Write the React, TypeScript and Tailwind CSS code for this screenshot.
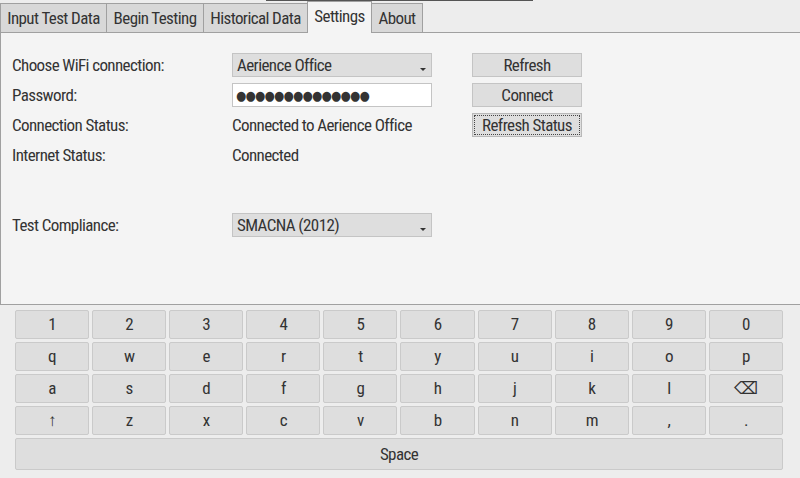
import React from "react";

const tabs = [
  { label: "Input Test Data", w: "w-[107px]" },
  { label: "Begin Testing", w: "w-[98px]" },
  { label: "Historical Data", w: "w-[105px]" },
  { label: "Settings", w: "w-[65px]" },
  { label: "About", w: "w-[52px]" },
];

const keyRows = [
  ["1", "2", "3", "4", "5", "6", "7", "8", "9", "0"],
  ["q", "w", "e", "r", "t", "y", "u", "i", "o", "p"],
  ["a", "s", "d", "f", "g", "h", "j", "k", "l", "⌫"],
  ["↑", "z", "x", "c", "v", "b", "n", "m", ",", "."],
];

function Combo({ value }: { value: string }) {
  return (
    <div className="relative flex h-[24px] w-[200px] items-center border border-[#c4c4c4] bg-[#dedede] pl-[4px]">
      <span>{value}</span>
      <span className="absolute right-[5px] top-[14px] h-0 w-0 border-x-[3px] border-t-[3px] border-x-transparent border-t-[#333]" />
    </div>
  );
}

function Btn({ label, focused }: { label: string; focused?: boolean }) {
  return (
    <div
      className={
        "flex h-[24px] w-[110px] items-center justify-center border bg-[#dedede] " +
        (focused ? "border-[#b8b8b8] outline outline-1 outline-dotted -outline-offset-[3px] outline-[#444]" : "border-[#c4c4c4]")
      }
    >
      {label}
    </div>
  );
}

export default function App() {
  return (
    <div
      className="relative h-[478px] w-[800px] overflow-hidden bg-[#ededed] text-[17px] leading-none tracking-[-0.6px] text-[#333] [font-stretch:condensed]"
      style={{ fontFamily: "'Roboto Condensed', 'Liberation Sans Narrow', Roboto, sans-serif" }}
    >
      {/* stray line on top of the window */}
      <div className="absolute left-[266px] top-0 h-px w-[267px] bg-[#555]" />

      {/* tab bar */}
      <div className="flex h-[32px] items-end">
        {tabs.map((t) => {
          const active = t.label === "Settings";
          return (
            <div
              key={t.label}
              className={
                (active
                  ? "relative z-10 -mb-px h-[32px] bg-[#f4f4f4] pb-[2px] "
                  : "h-[29px] bg-[#d8d8d8] ") +
                "-ml-px flex items-center justify-center border border-b-0 border-[#a0a0a0] first:ml-0 " +
                t.w
              }
            >
              {t.label}
            </div>
          );
        })}
      </div>

      {/* settings panel */}
      <div className="h-[273px] border border-r-0 border-[#a0a0a0] bg-[#f4f4f4] pl-[11px] pt-[20px]">
        <div className="flex flex-col gap-[6px]">
          <div className="flex h-[24px] items-center">
            <span className="w-[220px]">Choose WiFi connection:</span>
            <Combo value="Aerience Office" />
            <div className="ml-[40px]">
              <Btn label="Refresh" />
            </div>
          </div>
          <div className="flex h-[24px] items-center">
            <span className="w-[220px]">Password:</span>
            <div className="flex h-[24px] w-[200px] items-center border border-[#c4c4c4] bg-white pl-[3px] text-[13px] tracking-[-0.7px]" style={{ fontFamily: "'DejaVu Sans', sans-serif" }}>
              ●●●●●●●●●●●●●●
            </div>
            <div className="ml-[40px]">
              <Btn label="Connect" />
            </div>
          </div>
          <div className="flex h-[24px] items-center">
            <span className="w-[220px]">Connection Status:</span>
            <span className="w-[200px]">Connected to Aerience Office</span>
            <div className="ml-[40px]">
              <Btn label="Refresh Status" focused />
            </div>
          </div>
          <div className="flex h-[24px] items-center">
            <span className="w-[220px]">Internet Status:</span>
            <span>Connected</span>
          </div>
          <div className="mt-[40px] flex h-[24px] items-center">
            <span className="w-[220px]">Test Compliance:</span>
            <Combo value="SMACNA (2012)" />
          </div>
        </div>
      </div>

      {/* on-screen keyboard */}
      <div className="flex flex-col gap-[3px] pl-[15px] pr-[17px] pt-[5px]">
        {keyRows.map((row, i) => (
          <div key={i} className="grid grid-cols-10 gap-[3px]">
            {row.map((k) => (
              <div
                key={k}
                className="flex h-[29px] items-center justify-center rounded-[2px] border border-[#cacaca] bg-[#dedede]"
              >
                {k}
              </div>
            ))}
          </div>
        ))}
        <div className="flex h-[32px] items-center justify-center rounded-[2px] border border-[#cacaca] bg-[#dedede]">
          Space
        </div>
      </div>
    </div>
  );
}
